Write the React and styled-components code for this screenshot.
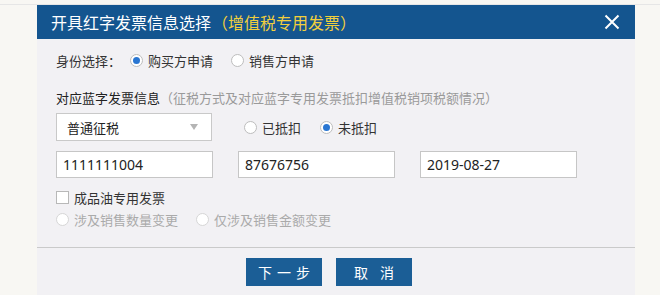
import React, { useState } from "react";
import styled, { createGlobalStyle } from "styled-components";

const GlobalStyle = createGlobalStyle`
  html, body {
    margin: 0;
    padding: 0;
    background: #f8f7f3;
    font-family: "Noto Sans CJK SC", "Noto Sans", sans-serif;
  }
`;

const Page = styled.div`
  padding-top: 4px;
  height: 291px;
  overflow: hidden;
`;

const Strip = styled.div`
  border-top: 1px solid #e6e6e6;
  padding-left: 37px;
`;

const Dialog = styled.div`
  width: 598px;
  height: 290px;
  background: #f2f1f4;
`;

const Header = styled.div`
  height: 34px;
  background: #14558f;
  display: flex;
  align-items: center;
  justify-content: space-between;
  padding: 0 15px 0 14px;
`;

const Title = styled.div`
  font-size: 16px;
  color: #ffffff;
  span {
    color: #f2cf3d;
    margin-left: 1px;
  }
`;

const Close = styled.button`
  border: none;
  background: transparent;
  padding: 0;
  display: flex;
  cursor: pointer;
`;

const Body = styled.div`
  padding: 0 19px;
`;

const Row = styled.div`
  display: flex;
  align-items: center;
  height: ${(p) => p.$h || 22}px;
  margin-top: ${(p) => p.$top || 0}px;
  gap: ${(p) => p.$gap || 0}px;
  font-size: 13px;
  color: #333;
`;

const Label = styled.span`
  margin-right: 9px;
`;

const Strong = styled.span`
  color: #222;
`;

const Hint = styled.span`
  color: #9a9a9a;
`;

const Option = styled.label`
  display: flex;
  align-items: center;
  gap: 5px;
  margin-right: ${(p) => p.$gap ?? 18}px;
  color: ${(p) => (p.$disabled ? "#aaaaaa" : "#333")};
  cursor: ${(p) => (p.$disabled ? "default" : "pointer")};
`;

const Dot = styled.span`
  box-sizing: border-box;
  width: 13px;
  height: 13px;
  border-radius: 50%;
  border: 1px solid ${(p) => (p.$disabled ? "#d6d6d6" : "#bdbdbd")};
  background: #fff;
  display: flex;
  align-items: center;
  justify-content: center;
  &::after {
    content: "";
    width: 7px;
    height: 7px;
    border-radius: 50%;
    background: ${(p) => (p.$on ? "#2a76d2" : "transparent")};
  }
`;

const Select = styled.div`
  box-sizing: border-box;
  width: 156px;
  height: 28px;
  border: 1px solid #c9c9c9;
  background: #fff;
  display: flex;
  align-items: center;
  justify-content: space-between;
  padding: 0 13px 0 10px;
  font-size: 13px;
  color: #222;
  margin-right: 32px;
`;

const Arrow = styled.span`
  width: 0;
  height: 0;
  border-left: 4px solid transparent;
  border-right: 4px solid transparent;
  border-top: 6px solid #b4b4b4;
`;

const Field = styled.input`
  box-sizing: border-box;
  width: 157px;
  height: 27px;
  border: 1px solid #c6c6c6;
  background: #fff;
  padding: 0 6px;
  font-family: "Noto Sans", "Noto Sans CJK SC", sans-serif;
  font-size: 14px;
  color: #222;
  outline: none;
`;

const Box = styled.span`
  box-sizing: border-box;
  width: 13px;
  height: 13px;
  border: 1px solid #b8b8b8;
  background: #fff;
`;

const Divider = styled.div`
  margin-top: 19px;
  border-top: 1px solid #cacaca;
`;

const Footer = styled.div`
  display: flex;
  justify-content: center;
  gap: 14px;
  padding-top: 10px;
  padding-right: 14px;
`;

const Button = styled.button`
  width: 76px;
  height: 28px;
  border: none;
  background: #1b5e96;
  color: #fff;
  font-family: "Noto Sans CJK SC", sans-serif;
  font-size: 14px;
  letter-spacing: ${(p) => p.$ls}px;
  text-indent: ${(p) => p.$ls}px;
  cursor: pointer;
`;

const Radio = ({ on, disabled, gap, children, onClick }) => (
  <Option $disabled={disabled} $gap={gap} onClick={onClick}>
    <Dot $on={on} $disabled={disabled} />
    {children}
  </Option>
);

export default function App() {
  const [who, setWho] = useState("buy");
  const [deduct, setDeduct] = useState("no");

  return (
    <Page>
      <GlobalStyle />
      <Strip>
        <Dialog>
          <Header>
            <Title>
              开具红字发票信息选择<span>（增值税专用发票）</span>
            </Title>
            <Close>
              <svg width="16" height="16" viewBox="0 0 16 16">
                <path d="M1.5 1.5 L14.5 14.5 M14.5 1.5 L1.5 14.5" stroke="#fff" strokeWidth="2" />
              </svg>
            </Close>
          </Header>
          <Body>
            <Row $top={10}>
              <Label>身份选择：</Label>
              <Radio on={who === "buy"} onClick={() => setWho("buy")}>购买方申请</Radio>
              <Radio on={who === "sell"} onClick={() => setWho("sell")}>销售方申请</Radio>
            </Row>
            <Row $top={15}>
              <Strong>对应蓝字发票信息</Strong>
              <Hint>（征税方式及对应蓝字专用发票抵扣增值税销项税额情况）</Hint>
            </Row>
            <Row $top={5} $h={28}>
              <Select>
                普通征税
                <Arrow />
              </Select>
              <Radio on={deduct === "yes"} gap={19} onClick={() => setDeduct("yes")}>已抵扣</Radio>
              <Radio on={deduct === "no"} onClick={() => setDeduct("no")}>未抵扣</Radio>
            </Row>
            <Row $top={10} $h={27} $gap={25}>
              <Field defaultValue="1111111004" />
              <Field defaultValue="87676756" />
              <Field defaultValue="2019-08-27" />
            </Row>
            <Row $top={10} $h={18}>
              <Option $gap={0}>
                <Box />
                成品油专用发票
              </Option>
            </Row>
            <Row $top={4} $h={18}>
              <Radio disabled>涉及销售数量变更</Radio>
              <Radio disabled>仅涉及销售金额变更</Radio>
            </Row>
          </Body>
          <Divider />
          <Footer>
            <Button $ls={5}>下一步</Button>
            <Button $ls={12}>取消</Button>
          </Footer>
        </Dialog>
      </Strip>
    </Page>
  );
}
